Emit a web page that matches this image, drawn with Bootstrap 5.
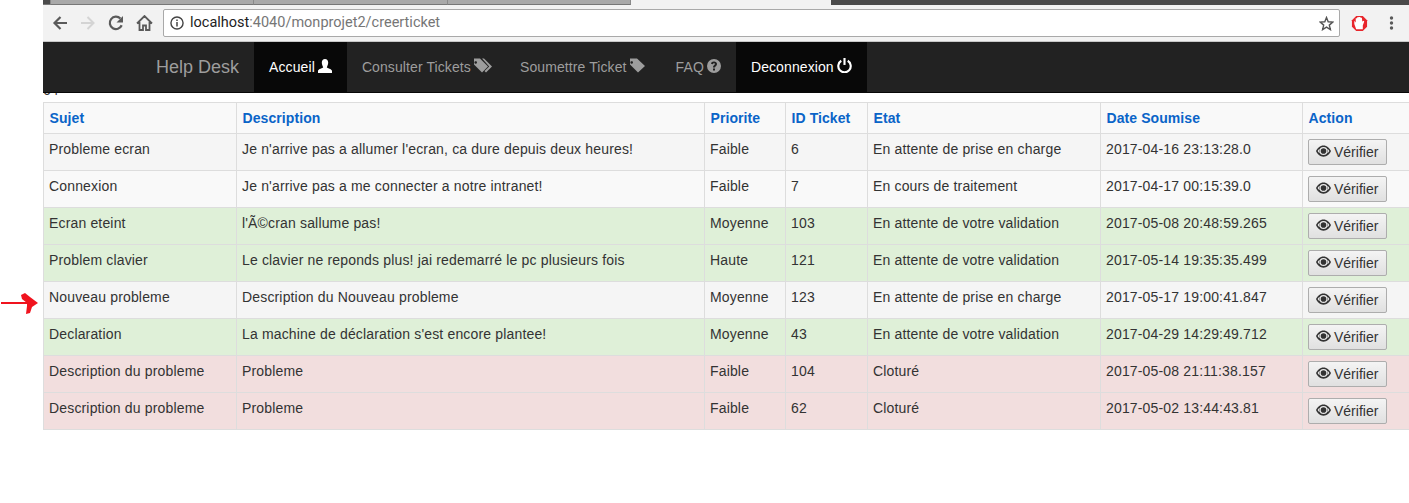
<!DOCTYPE html>
<html lang="fr">
<head>
<meta charset="UTF-8">
<title>Help Desk</title>
<link href="https://cdn.jsdelivr.net/npm/bootstrap@5.3.0/dist/css/bootstrap.min.css" rel="stylesheet">
<style>
    html, body { height: 503px; overflow: hidden; }
    body { background: #fff; font-family: "Liberation Sans", Arial, sans-serif; font-size: 14px; color: #333; padding-left: 43px; line-height: 20px; }
    .tabstrip { height: 5px; background: #4a4a4a; display: flex; }
    .tabstrip-old { height: 4px; background: #a9a9a9; border-bottom: 1px solid #777; border-right: 1px solid #8a8a8a; box-sizing: content-box; flex: none; }
    .tabstrip-on { width: 200px; background: #f2f2f2; }
    .browser-bar { height: 37px; background: #f2f2f2; border-bottom: 1px solid #c8c8c8; padding: 0 4px 0 3px; }
    .browser-btn { width: 28px; display: flex; justify-content: center; flex: none; }
    .address { height: 28px; margin-left: 5px; flex: 1; background: #fff; border: 1px solid #a9a9a9; border-radius: 2px; font-family: "Roboto", "Liberation Sans", sans-serif; font-size: 14.5px; color: #767676; padding: 0 5px 0 6px; }
    .address b { font-weight: 400; color: #222; }
    .hd-nav { height: 51px; background: #222; border-bottom: 1px solid #080808; padding: 0 0 0 98px; position: relative; z-index: 1; }
    .hd-brand { font-size: 18px; color: #9d9d9d; padding: 0 15px; line-height: 50px; text-decoration: none; }
    .hd-link { color: #9d9d9d; line-height: 50px; padding: 0 15px; height: 50px; text-decoration: none; display: flex; align-items: center; gap: 3px; letter-spacing: .1px; }
    .hd-link.on { color: #fff; background: #080808; }
    .hd-link svg { fill: currentColor; flex: none; margin-top: -3px; }
    .hd-tags { margin-right: -2px; }
    .hd-tag { margin-right: 1px; }
    .stray { height: 9px; line-height: 14px; display: flow-root; }
    .stray span { display: block; margin-top: -10px; }
    .tickets { width: 1366px; table-layout: fixed; border-collapse: collapse; margin: 0; letter-spacing: .16px; }
    .tickets th, .tickets td { border: 1px solid #ddd; padding: 5px; vertical-align: top; font-weight: 400; height: 37px; line-height: 20px; background: #f9f9f9; color: #333; }
    .tickets th { height: 31px; font-weight: 700; color: #0a64c8; padding: 5px 5.5px; letter-spacing: .08px; }
    .tickets tr.wait td { background: #f5f5f5; }
    .tickets tr.ok td { background: #dff0d8; }
    .tickets tr.ko td { background: #f2dede; }
    .tickets td:last-child { padding: 5px 5px 0; }
    .verify { display: inline-flex; align-items: center; gap: 3px; height: 26px; width: 79px; padding: 0 0 0 7px; font-size: 14px; color: #333; background: linear-gradient(#f4f4f4, #e0e0e0); border: 1px solid #adadad; border-radius: 2px; }
    .verify svg { margin-top: -2px; }
    .red-arrow { position: absolute; left: 0; top: 292px; }
</style>
</head>
<body>
<div class="tabstrip">
    <div class="tabstrip-old" style="width:7px;background:#4a4a4a"></div>
    <div class="tabstrip-old" style="width:202px"></div>
    <div class="tabstrip-old" style="width:193px"></div>
    <div class="tabstrip-old" style="width:182px"></div>
    <div class="tabstrip-on"></div>
</div>
<div class="browser-bar d-flex align-items-center">
    <span class="browser-btn"><svg width="16" height="16" viewBox="0 0 16 16"><path d="M15 8H3M8.500 2 2.500 8l6 6" fill="none" stroke="#5a5a5a" stroke-width="2.200"/></svg></span>
    <span class="browser-btn"><svg width="16" height="16" viewBox="0 0 16 16"><path d="M1 8h12M7.500 2l6 6-6 6" fill="none" stroke="#d4d4d4" stroke-width="2"/></svg></span>
    <span class="browser-btn"><svg width="16" height="16" viewBox="0 0 16 16"><path d="M13.700 10.300A6.200 6.200 0 1 1 12.400 3.500" fill="none" stroke="#5a5a5a" stroke-width="2.200"/><path d="M15 1v6.500H8.500z" fill="#5a5a5a"/></svg></span>
    <span class="browser-btn"><svg width="17" height="16" viewBox="0 0 17 16"><path d="M1 8.500 8.500 1l7.500 7.500M3.500 7v8h3.500v-4.500h3V15h3.500V7" fill="none" stroke="#5a5a5a" stroke-width="1.800"/></svg></span>
    <div class="address d-flex align-items-center">
        <svg class="flex-none" style="margin-right:6px" width="14" height="14" viewBox="0 0 15 15"><circle cx="7.500" cy="7.500" r="6.500" fill="none" stroke="#444" stroke-width="1.500"/><path d="M6.700 6.500h1.600v4.700H6.700zM6.700 3.700h1.600v1.600H6.700z" fill="#444"/></svg>
        <span class="flex-grow-1"><b>localhost</b>:4040/monprojet2/creerticket</span>
        <svg width="15" height="15" viewBox="0 0 15 15"><path d="M7.500 1.500 9.200 5.800l4.600.3-3.500 3 1.100 4.500-3.900-2.500-3.900 2.500 1.100-4.500-3.500-3 4.600-.3z" fill="none" stroke="#555" stroke-width="1.400"/></svg>
    </div>
    <span class="browser-btn ms-1" style="margin-left:5px!important"><svg width="17" height="17" viewBox="0 0 18 18"><path d="M5.500 1h7L17 5.500v7L12.500 17h-7L1 12.500v-7z" fill="#e8262c"/><path d="M5.500 15 3.500 9.500V6l1.500 2V3.500h1.500V2.500h1.500v-.5H10v1h1.500l.5 4 1.500-1 .5 1-1.500 4V15z" fill="#fff"/></svg></span>
    <span class="browser-btn ms-1"><svg width="5" height="16" viewBox="0 0 5 16"><circle cx="2.500" cy="3" r="1.700" fill="#5a5a5a"/><circle cx="2.500" cy="8" r="1.700" fill="#5a5a5a"/><circle cx="2.500" cy="13" r="1.700" fill="#5a5a5a"/></svg></span>
</div>
<nav class="hd-nav d-flex">
    <a class="hd-brand" href="#">Help Desk</a>
    <a class="hd-link on" href="#">Accueil
        <svg width="14" height="14" viewBox="0 0 14 14"><path d="M7 0c2 0 3.200 1.500 3.200 3.600S9.200 7.500 8.800 8.200c0 .9 5.200 1.600 5.200 3.800v2H0v-2c0-2.200 5.200-2.900 5.200-3.800C4.800 7.500 3.800 5.700 3.800 3.600S5 0 7 0z"/></svg></a>
    <a class="hd-link" href="#">Consulter Tickets
        <svg class="hd-tags" width="18" height="15" viewBox="0 0 18 15"><path d="M0 .5v6L8 14.500 14 8.500 6 .5zM3 4.500a1.300 1.300 0 1 1 0-.1z" fill-rule="evenodd"/><path d="M8 .5h2l8 8-6 6-1.500-1.500 4.700-4.500z"/></svg></a>
    <a class="hd-link" href="#">Soumettre Ticket
        <svg class="hd-tag" width="15" height="15" viewBox="0 0 15 15"><path d="M0 .5v6L8 14.500 15 8 7 .5zM3 4.500a1.300 1.300 0 1 1 0-.1z" fill-rule="evenodd"/></svg></a>
    <a class="hd-link" href="#">FAQ
        <svg width="14" height="14" viewBox="0 0 14 14"><path fill-rule="evenodd" d="M7 0a7 7 0 1 1 0 14A7 7 0 0 1 7 0zM6 9.500v2h2v-2zM7 2.500c-1.700 0-2.800.9-3 2.300l1.800.4c.1-.6.500-1 1.100-1 .6 0 1.100.3 1.100.8 0 .9-2 1.200-2 3.100v.4h2c0-1.400 2-1.500 2-3.600C10 3.500 8.700 2.500 7 2.500z"/></svg></a>
    <a class="hd-link on" href="#">Deconnexion
        <svg width="15" height="15" viewBox="0 0 14 14"><path d="M4 2.600a5.800 5.800 0 1 0 6 0" fill="none" stroke="currentColor" stroke-width="2"/><path d="M6 0h2v6.500H6z"/></svg></a>
</nav>
<div class="stray"><span>64</span></div>
<svg width="0" height="0" class="d-block">
    <symbol id="eye" viewBox="0 0 16 12"><path fill-rule="evenodd" d="M8 0c3.700 0 6.500 2.700 8 6-1.500 3.300-4.300 6-8 6S1.500 9.300 0 6C1.500 2.700 4.300 0 8 0zM8 1.700A4.300 4.300 0 0 0 8 10.300 4.300 4.300 0 0 0 8 1.700zM1.800 6c.5 1 1.100 1.700 2 2.400A5.500 5.500 0 0 1 3.800 3.600C2.900 4.300 2.300 5 1.800 6zM14.200 6c-.5-1-1.100-1.700-2-2.400A5.500 5.500 0 0 1 12.200 8.400C13.100 7.700 13.700 7 14.200 6zM8 3a3 3 0 1 1 0 6 3 3 0 0 1 0-6z" fill="#333"/></symbol>
</svg>
<table class="tickets">
    <colgroup>
        <col style="width:193px"><col style="width:468px"><col style="width:81px"><col style="width:82px"><col style="width:233px"><col style="width:202px"><col style="width:107px">
    </colgroup>
    <thead>
        <tr><th>Sujet</th><th>Description</th><th>Priorite</th><th>ID Ticket</th><th>Etat</th><th>Date Soumise</th><th>Action</th></tr>
    </thead>
    <tbody id="rows"></tbody>
</table>
<svg class="red-arrow" width="42" height="24" viewBox="0 0 42 24"><path d="M1 11h30" stroke="#f0131e" stroke-width="2" fill="none"/><path d="M21 3 25 1 30 5 38 11 32 15 30 21 26 22 27 14 27 11 22 7z" fill="#f0131e"/></svg>
<script>
    const data = [
        ['wait', 'Probleme ecran', "Je n'arrive pas a allumer l'ecran, ca dure depuis deux heures!", 'Faible', '6', 'En attente de prise en charge', '2017-04-16 23:13:28.0'],
        ['', 'Connexion', "Je n'arrive pas a me connecter a notre intranet!", 'Faible', '7', 'En cours de traitement', '2017-04-17 00:15:39.0'],
        ['ok', 'Ecran eteint', "l'Ã©cran sallume pas!", 'Moyenne', '103', 'En attente de votre validation', '2017-05-08 20:48:59.265'],
        ['ok', 'Problem clavier', 'Le clavier ne reponds plus! jai redemarré le pc plusieurs fois', 'Haute', '121', 'En attente de votre validation', '2017-05-14 19:35:35.499'],
        ['wait', 'Nouveau probleme', 'Description du Nouveau probleme', 'Moyenne', '123', 'En attente de prise en charge', '2017-05-17 19:00:41.847'],
        ['ok', 'Declaration', "La machine de déclaration s'est encore plantee!", 'Moyenne', '43', 'En attente de votre validation', '2017-04-29 14:29:49.712'],
        ['ko', 'Description du probleme', 'Probleme', 'Faible', '104', 'Cloturé', '2017-05-08 21:11:38.157'],
        ['ko', 'Description du probleme', 'Probleme', 'Faible', '62', 'Cloturé', '2017-05-02 13:44:43.81']
    ];
    const body = document.getElementById('rows');
    data.forEach(function (r) {
        const tr = document.createElement('tr');
        tr.className = r[0];
        r.slice(1).forEach(function (v) {
            const td = document.createElement('td');
            td.textContent = v;
            tr.appendChild(td);
        });
        const act = document.createElement('td');
        act.innerHTML = '<button type="button" class="verify"><svg width="15" height="12"><use href="#eye"/></svg>Vérifier</button>';
        tr.appendChild(act);
        body.appendChild(tr);
    });
</script>
<script src="https://cdn.jsdelivr.net/npm/bootstrap@5.3.0/dist/js/bootstrap.bundle.min.js"></script>
</body>
</html>
